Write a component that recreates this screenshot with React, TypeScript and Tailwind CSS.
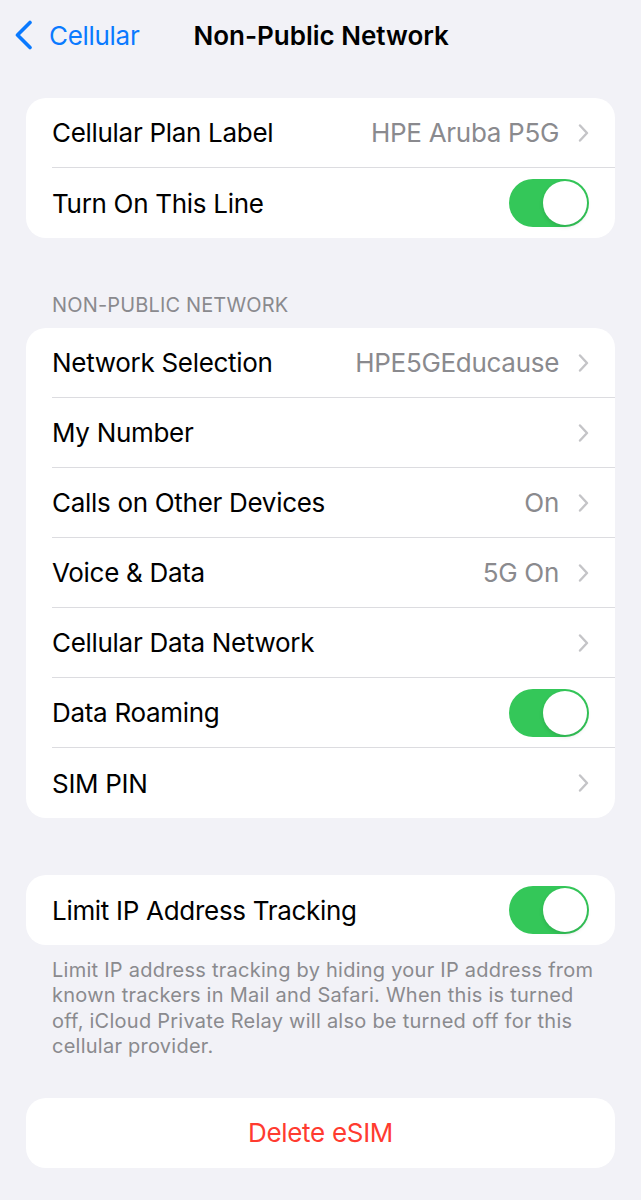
import React from 'react';

const font = { fontFamily: 'Inter, "Liberation Sans", sans-serif' };

function Chevron() {
  return (
    <svg width="11" height="18" viewBox="0 0 11 18" className="shrink-0">
      <path d="M2 1.5 L9 9 L2 16.5" fill="none" stroke="#c4c4c7" strokeWidth="2.4" strokeLinecap="round" strokeLinejoin="round" />
    </svg>
  );
}

function Toggle() {
  return (
    <div className="w-[80px] h-[48px] rounded-full bg-[#34c759] flex items-center justify-end pr-[2px]">
      <div className="w-[44px] h-[44px] rounded-full bg-white shadow-[0_2px_4px_rgba(0,0,0,0.12)]" />
    </div>
  );
}

type RowProps = { label: string; value?: string; toggle?: boolean; last?: boolean };

function Row({ label, value, toggle, last }: RowProps) {
  return (
    <div className="pl-[26px] h-[70px] flex">
      <div className={`flex-1 flex items-center justify-between pr-[26px] ${last ? '' : 'border-b border-[#dcdce0]'}`}>
        <span className="text-[26px] text-black tracking-[-0.3px]">{label}</span>
        {toggle ? (
          <Toggle />
        ) : (
          <div className="flex items-center gap-[19px]">
            {value && <span className="text-[26px] text-[#8a8a8e] tracking-[-0.3px]">{value}</span>}
            <Chevron />
          </div>
        )}
      </div>
    </div>
  );
}

export default function App() {
  return (
    <div className="min-h-[1200px] w-[641px] bg-[#f2f2f7] antialiased" style={font}>
      {/* Nav bar */}
      <header className="h-[70px] flex items-center pl-[14px]">
        <div className="flex items-center gap-[15px] text-[#0a7aff]">
          <svg width="20" height="30" viewBox="0 0 20 30">
            <path d="M16 2.5 L3.5 15 L16 27.5" fill="none" stroke="#0a7aff" strokeWidth="3.6" strokeLinecap="round" strokeLinejoin="round" />
          </svg>
          <span className="text-[26px] tracking-[-0.3px]">Cellular</span>
        </div>
        <h1 className="ml-[54px] text-[26px] font-semibold text-black tracking-[0px]">Non-Public Network</h1>
      </header>

      <div className="px-[26px] pt-[28px]">
        <section className="bg-white rounded-[20px] overflow-hidden">
          <Row label="Cellular Plan Label" value="HPE Aruba P5G" />
          <Row label="Turn On This Line" toggle last />
        </section>

        <div className="pl-[26px] pt-[52px] pb-[8px] text-[20px] text-[#8a8a8e] uppercase tracking-[0.15px]">Non-Public Network</div>

        <section className="bg-white rounded-[20px] overflow-hidden">
          <Row label="Network Selection" value="HPE5GEducause" />
          <Row label="My Number" />
          <Row label="Calls on Other Devices" value="On" />
          <Row label="Voice & Data" value="5G On" />
          <Row label="Cellular Data Network" />
          <Row label="Data Roaming" toggle />
          <Row label="SIM PIN" last />
        </section>

        <section className="mt-[57px] bg-white rounded-[20px] overflow-hidden">
          <Row label="Limit IP Address Tracking" toggle last />
        </section>

        <p className="pl-[26px] pr-[18px] pt-[13px] text-[20px] leading-[25.4px] text-[#8a8a8e] tracking-[0.25px]">
          Limit IP address tracking by hiding your IP address from known trackers in Mail and Safari. When this is turned off, iCloud Private Relay will also be turned off for this cellular provider.
        </p>

        <button className="mt-[38px] w-full h-[70px] bg-white rounded-[20px] text-[26px] text-[#ff3b30] tracking-[-0.3px]">
          Delete eSIM
        </button>
      </div>
    </div>
  );
}
